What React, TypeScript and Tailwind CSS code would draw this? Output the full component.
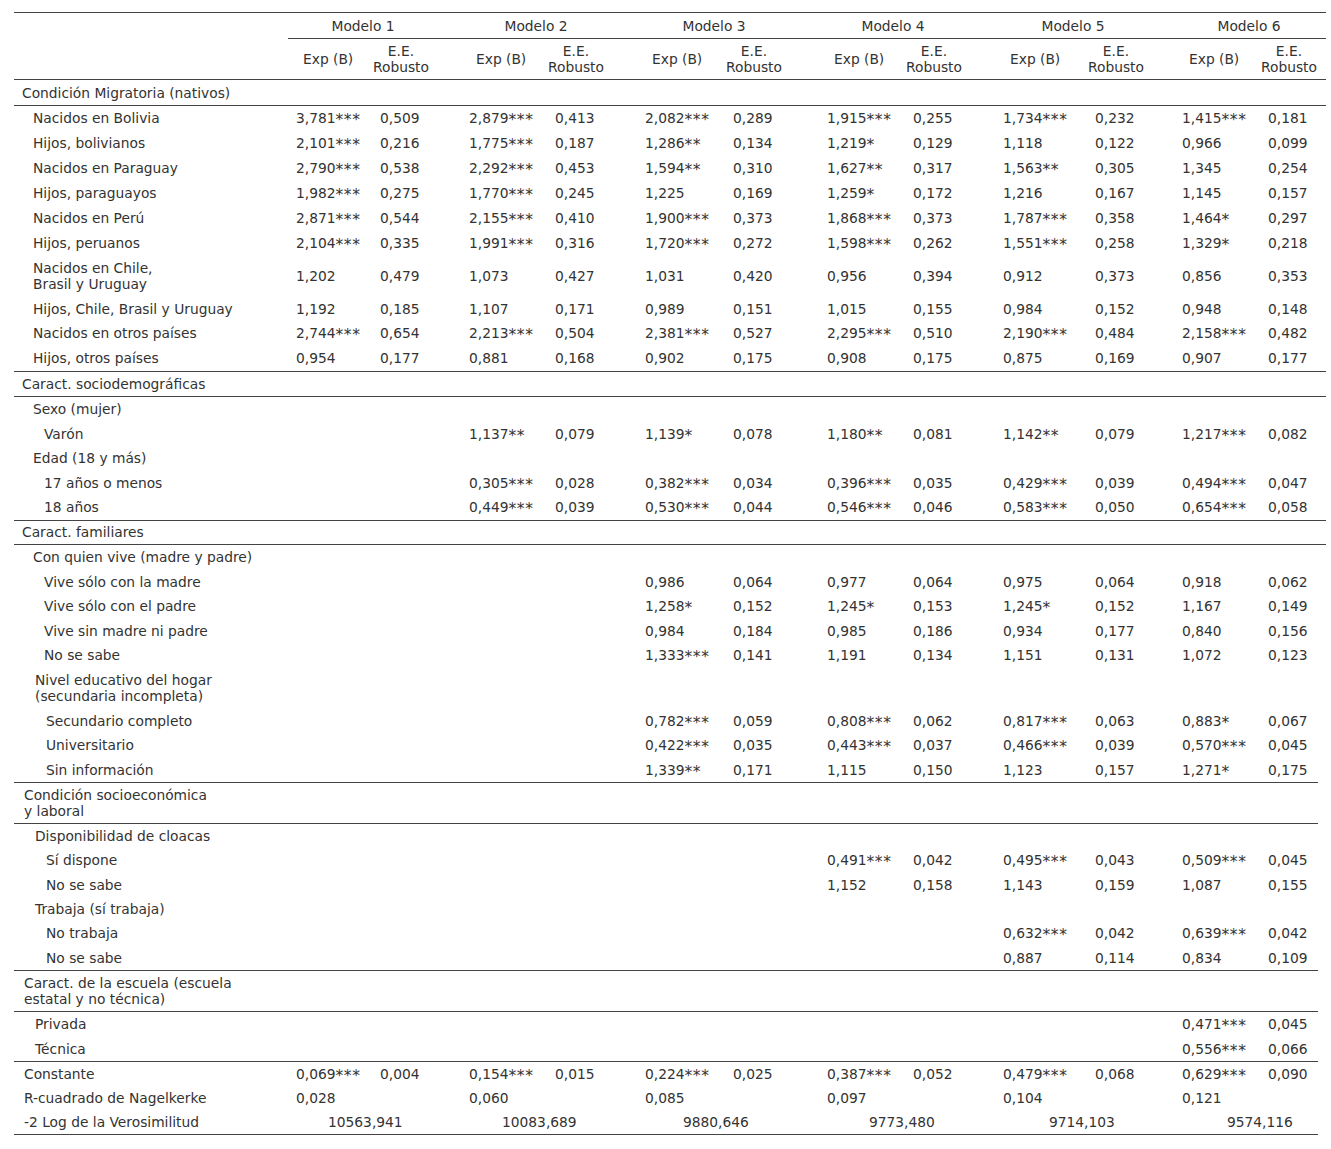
import React from 'react';

// column widths for the 12 value columns (Exp / E.E. per model)
const COLW = [
  'w-[84px]', 'w-[89px]',
  'w-[86px]', 'w-[90px]',
  'w-[88px]', 'w-[94px]',
  'w-[86px]', 'w-[90px]',
  'w-[92px]', 'w-[87px]',
  'w-[86px]', 'w-[66px]',
];

const MODELS = [
  { name: 'Modelo 1', w: 'w-[173px]', pr: 'pr-[23px]', log: '10563,941', logPl: 'pl-[40px]' },
  { name: 'Modelo 2', w: 'w-[176px]', pr: 'pr-[26px]', log: '10083,689', logPl: 'pl-[41px]' },
  { name: 'Modelo 3', w: 'w-[182px]', pr: 'pr-[28px]', log: '9880,646', logPl: 'pl-[46px]' },
  { name: 'Modelo 4', w: 'w-[176px]', pr: 'pr-[28px]', log: '9773,480', logPl: 'pl-[50px]' },
  { name: 'Modelo 5', w: 'w-[179px]', pr: 'pr-[23px]', log: '9714,103', logPl: 'pl-[54px]' },
  { name: 'Modelo 6', w: 'w-[152px]', pr: 'pr-[2px]', log: '9574,116', logPl: 'pl-[53px]' },
];

// label indents
const I0 = 'pl-[8px]';
const I0b = 'pl-[10px]';
const I1 = 'pl-[19px]';
const I1b = 'pl-[21px]';
const I2 = 'pl-[30px]';
const I2b = 'pl-[32px]';

// row paddings (the source table has slightly uneven row heights)
const PA = 'py-[4.45px]';
const PB = 'py-[4.3px]';
const PD = 'py-[4.15px]';
const PE = 'py-[4px]';

type Row = {
  label: React.ReactNode;
  ind: string;
  v?: string;
  section?: boolean;
  line?: 'full' | 'short';
  p?: string;
  log?: boolean;
};

const rows: Row[] = [
  { label: 'Condición Migratoria (nativos)', ind: I0, section: true, line: 'full', p: 'py-[4.5px]' },
  { label: 'Nacidos en Bolivia', ind: I1, p: PA, v: '3,781*** 0,509 2,879*** 0,413 2,082*** 0,289 1,915*** 0,255 1,734*** 0,232 1,415*** 0,181' },
  { label: 'Hijos, bolivianos', ind: I1, p: PA, v: '2,101*** 0,216 1,775*** 0,187 1,286** 0,134 1,219* 0,129 1,118 0,122 0,966 0,099' },
  { label: 'Nacidos en Paraguay', ind: I1, p: PA, v: '2,790*** 0,538 2,292*** 0,453 1,594** 0,310 1,627** 0,317 1,563** 0,305 1,345 0,254' },
  { label: 'Hijos, paraguayos', ind: I1, p: PA, v: '1,982*** 0,275 1,770*** 0,245 1,225 0,169 1,259* 0,172 1,216 0,167 1,145 0,157' },
  { label: 'Nacidos en Perú', ind: I1, p: PA, v: '2,871*** 0,544 2,155*** 0,410 1,900*** 0,373 1,868*** 0,373 1,787*** 0,358 1,464* 0,297' },
  { label: 'Hijos, peruanos', ind: I1, p: PA, v: '2,104*** 0,335 1,991*** 0,316 1,720*** 0,272 1,598*** 0,262 1,551*** 0,258 1,329* 0,218' },
  { label: <>Nacidos en Chile,<br />Brasil y Uruguay</>, ind: I1, p: PA, v: '1,202 0,479 1,073 0,427 1,031 0,420 0,956 0,394 0,912 0,373 0,856 0,353' },
  { label: 'Hijos, Chile, Brasil y Uruguay', ind: I1, p: PA, v: '1,192 0,185 1,107 0,171 0,989 0,151 1,015 0,155 0,984 0,152 0,948 0,148' },
  { label: 'Nacidos en otros países', ind: I1, p: PA, v: '2,744*** 0,654 2,213*** 0,504 2,381*** 0,527 2,295*** 0,510 2,190*** 0,484 2,158*** 0,482' },
  { label: 'Hijos, otros países', ind: I1, p: PA, line: 'full', v: '0,954 0,177 0,881 0,168 0,902 0,175 0,908 0,175 0,875 0,169 0,907 0,177' },

  { label: 'Caract. sociodemográficas', ind: I0, section: true, line: 'full', p: 'py-[4px]' },
  { label: 'Sexo (mujer)', ind: I1, p: PB },
  { label: 'Varón', ind: I2, p: PB, v: '- - 1,137** 0,079 1,139* 0,078 1,180** 0,081 1,142** 0,079 1,217*** 0,082' },
  { label: 'Edad (18 y más)', ind: I1, p: PB },
  { label: '17 años o menos', ind: I2, p: PB, v: '- - 0,305*** 0,028 0,382*** 0,034 0,396*** 0,035 0,429*** 0,039 0,494*** 0,047' },
  { label: '18 años', ind: I2, p: PB, line: 'full', v: '- - 0,449*** 0,039 0,530*** 0,044 0,546*** 0,046 0,583*** 0,050 0,654*** 0,058' },

  { label: 'Caract. familiares', ind: I0, section: true, line: 'full', p: 'py-[3.5px]' },
  { label: 'Con quien vive (madre y padre)', ind: I1, p: PB },
  { label: 'Vive sólo con la madre', ind: I2, p: PB, v: '- - - - 0,986 0,064 0,977 0,064 0,975 0,064 0,918 0,062' },
  { label: 'Vive sólo con el padre', ind: I2, p: PB, v: '- - - - 1,258* 0,152 1,245* 0,153 1,245* 0,152 1,167 0,149' },
  { label: 'Vive sin madre ni padre', ind: I2, p: PB, v: '- - - - 0,984 0,184 0,985 0,186 0,934 0,177 0,840 0,156' },
  { label: 'No se sabe', ind: I2, p: PB, v: '- - - - 1,333*** 0,141 1,191 0,134 1,151 0,131 1,072 0,123' },
  { label: <>Nivel educativo del hogar<br />(secundaria incompleta)</>, ind: I1b, p: PB },
  { label: 'Secundario completo', ind: I2b, p: PB, v: '- - - - 0,782*** 0,059 0,808*** 0,062 0,817*** 0,063 0,883* 0,067' },
  { label: 'Universitario', ind: I2b, p: PB, v: '- - - - 0,422*** 0,035 0,443*** 0,037 0,466*** 0,039 0,570*** 0,045' },
  { label: 'Sin información', ind: I2b, p: PB, line: 'short', v: '- - - - 1,339** 0,171 1,115 0,150 1,123 0,157 1,271* 0,175' },

  { label: <>Condición socioeconómica<br />y laboral</>, ind: I0b, section: true, line: 'short', p: 'py-[4px]' },
  { label: 'Disponibilidad de cloacas', ind: I1b, p: PD },
  { label: 'Sí dispone', ind: I2b, p: PD, v: '- - - - - - 0,491*** 0,042 0,495*** 0,043 0,509*** 0,045' },
  { label: 'No se sabe', ind: I2b, p: PD, v: '- - - - - - 1,152 0,158 1,143 0,159 1,087 0,155' },
  { label: 'Trabaja (sí trabaja)', ind: I1b, p: PD },
  { label: 'No trabaja', ind: I2b, p: PD, v: '- - - - - - - - 0,632*** 0,042 0,639*** 0,042' },
  { label: 'No se sabe', ind: I2b, p: PD, line: 'short', v: '- - - - - - - - 0,887 0,114 0,834 0,109' },

  { label: <>Caract. de la escuela (escuela<br />estatal y no técnica)</>, ind: I0b, section: true, line: 'short', p: 'py-[4px]' },
  { label: 'Privada', ind: I1b, p: PB, v: '- - - - - - - - - - 0,471*** 0,045' },
  { label: 'Técnica', ind: I1b, p: PB, line: 'short', v: '- - - - - - - - - - 0,556*** 0,066' },

  { label: 'Constante', ind: I0b, p: PE, v: '0,069*** 0,004 0,154*** 0,015 0,224*** 0,025 0,387*** 0,052 0,479*** 0,068 0,629*** 0,090' },
  { label: 'R-cuadrado de Nagelkerke', ind: I0b, p: PE, v: '0,028 - 0,060 - 0,085 - 0,097 - 0,104 - 0,121 -' },
  { label: '-2 Log de la Verosimilitud', ind: I0b, p: PE, line: 'short', log: true },
];

// number with its significance stars drawn a bit larger, as in the source
const Val: React.FC<{ s: string }> = ({ s }) => {
  const k = s.indexOf('*');
  if (k < 0) return <>{s}</>;
  return (
    <>
      {s.slice(0, k)}
      <span className="text-[15.5px] leading-[8px] tracking-[0.6px] align-[-2px]">{s.slice(k)}</span>
    </>
  );
};

const TableRow: React.FC<{ row: Row }> = ({ row }) => {
  const vals = row.v ? row.v.split(' ') : [];
  const lineCls =
    row.line === 'full'
      ? 'w-[1312px] border-b border-[#444]'
      : row.line === 'short'
      ? 'w-[1304px] border-b border-[#444]'
      : 'w-[1312px]';

  return (
    <div className={`flex ${lineCls} ${row.p ?? PB}`}>
      <div className={`w-[274px] shrink-0 ${row.ind}`}>{row.label}</div>
      {row.log
        ? MODELS.map((m) => (
            <div key={m.name} className={`${m.w} shrink-0 ${m.logPl} flex items-center`}>
              {m.log}
            </div>
          ))
        : COLW.map((w, i) => (
            <div key={i} className={`${w} shrink-0 pl-2 flex items-center whitespace-nowrap`}>
              {vals[i] && vals[i] !== '-' ? (
                <span className="h-[16px]">
                  <Val s={vals[i]} />
                </span>
              ) : (
                ''
              )}
            </div>
          ))}
    </div>
  );
};

export default function App() {
  return (
    <div className="min-h-[1149px] w-[1331px] bg-white pt-[12px] pl-[14px] text-[#333] font-['DejaVu_Sans',sans-serif] text-[13.8px] leading-[16px]">
      <div className="w-[1312px] border-t border-[#444]">
        {/* model headers */}
        <div className="flex">
          <div className="w-[274px] shrink-0" />
          <div className="flex border-b border-[#444]">
            {MODELS.map((m) => (
              <div key={m.name} className={`${m.w} shrink-0 h-[25px] flex items-center justify-center ${m.pr}`}>
                {m.name}
              </div>
            ))}
          </div>
        </div>

        {/* sub headers */}
        <div className="flex h-[41px] border-b border-[#444]">
          <div className="w-[274px] shrink-0" />
          {COLW.map((w, i) =>
            i % 2 === 0 ? (
              <div key={i} className={`${w} shrink-0 pl-[15px] flex items-center`}>
                Exp (B)
              </div>
            ) : (
              <div key={i} className={`${w} shrink-0 pl-[1px] flex items-center`}>
                <span className="inline-block text-center">
                  E.E.
                  <br />
                  Robusto
                </span>
              </div>
            )
          )}
        </div>

        {rows.map((r, i) => (
          <TableRow key={i} row={r} />
        ))}
      </div>
    </div>
  );
}
